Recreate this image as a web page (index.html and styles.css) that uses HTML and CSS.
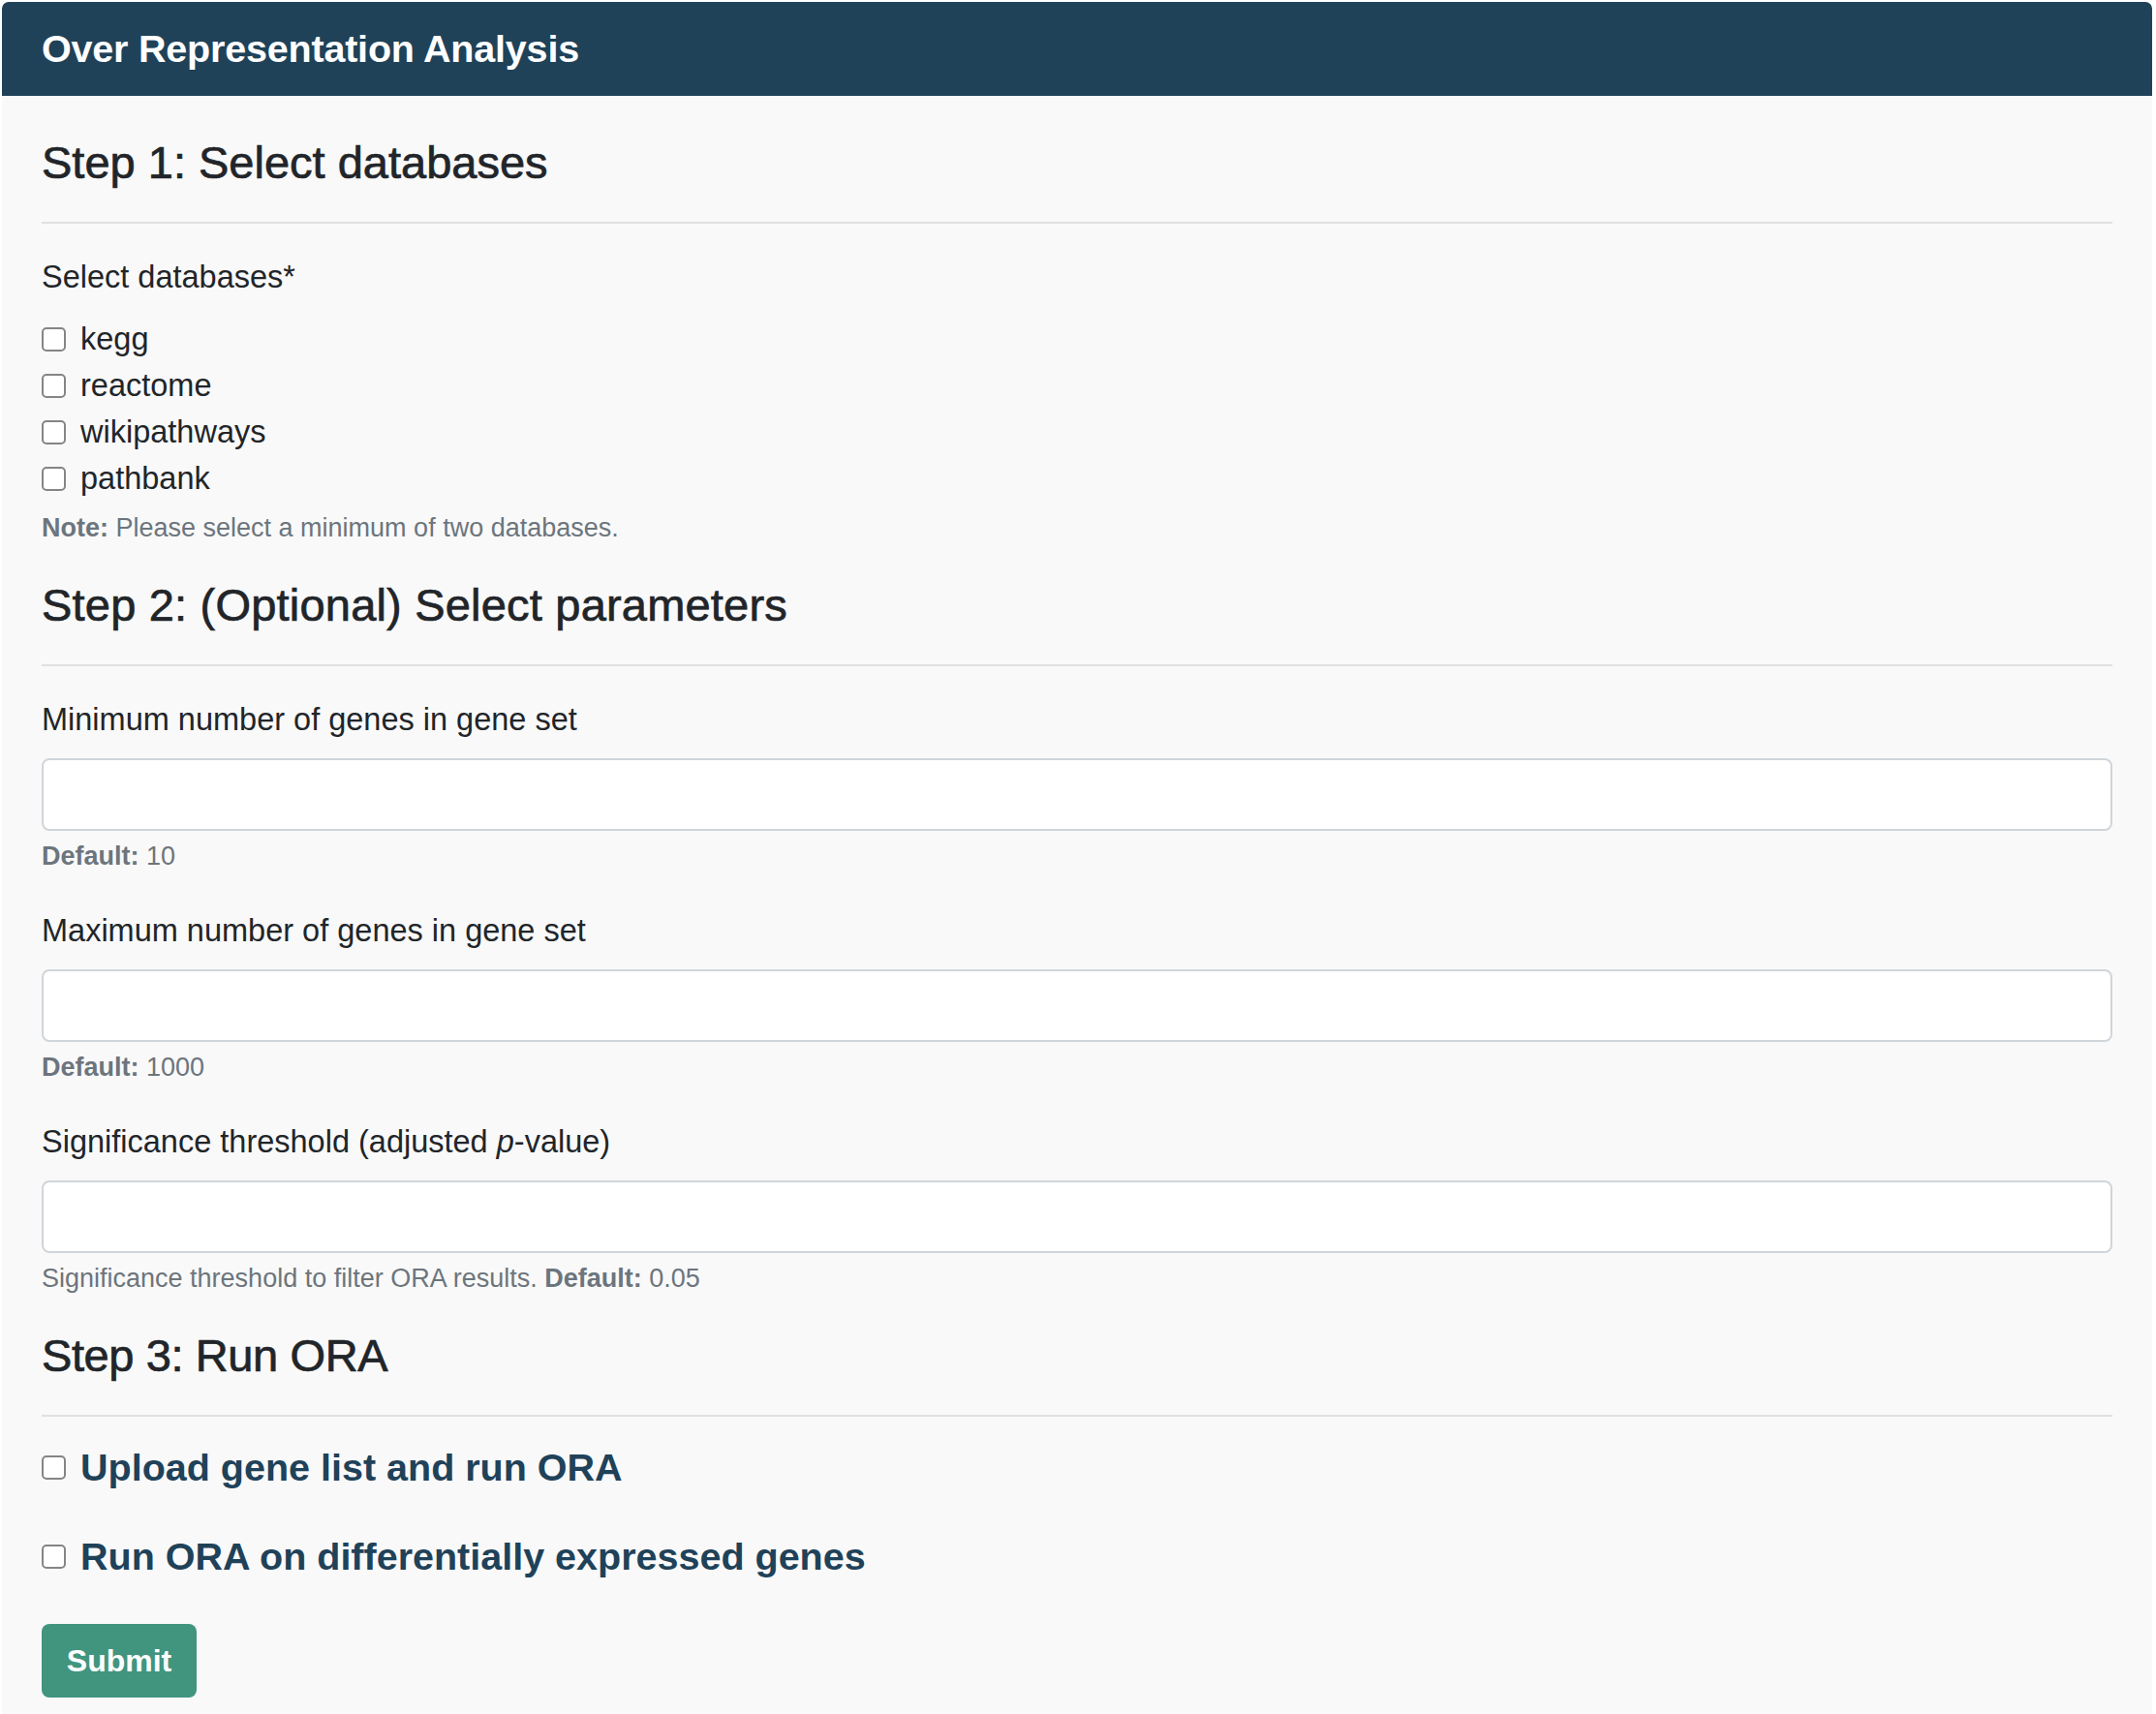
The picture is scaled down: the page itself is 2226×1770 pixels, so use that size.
FILE: index.html
```html
<!DOCTYPE html>
<html lang="en">
<head>
<meta charset="utf-8">
<title>Over Representation Analysis</title>
<link rel="stylesheet" href="styles.css">
</head>
<body>
<div class="card">
  <div class="card-header">
    <h1 class="card-title">Over Representation Analysis</h1>
  </div>
  <form class="card-body">
    <section class="step">
      <h2 class="step-title">Step 1: Select databases</h2>
      <hr class="rule">
      <div class="group">
        <div class="field-label">Select databases*</div>
        <div class="check-list">
          <label class="check"><input type="checkbox" class="box"><span>kegg</span></label>
          <label class="check"><input type="checkbox" class="box"><span>reactome</span></label>
          <label class="check"><input type="checkbox" class="box"><span>wikipathways</span></label>
          <label class="check"><input type="checkbox" class="box"><span>pathbank</span></label>
        </div>
        <div class="help help-note"><b>Note:</b> Please select a minimum of two databases.</div>
      </div>
    </section>

    <section class="step">
      <h2 class="step-title">Step 2: (Optional) Select parameters</h2>
      <hr class="rule">
      <div class="group">
        <label class="field-label">Minimum number of genes in gene set</label>
        <input type="text" class="text-input">
        <div class="help"><b>Default:</b> 10</div>
      </div>
      <div class="group">
        <label class="field-label">Maximum number of genes in gene set</label>
        <input type="text" class="text-input">
        <div class="help"><b>Default:</b> 1000</div>
      </div>
      <div class="group group-last">
        <label class="field-label">Significance threshold (adjusted <i>p</i>-value)</label>
        <input type="text" class="text-input">
        <div class="help">Significance threshold to filter ORA results. <b>Default:</b> 0.05</div>
      </div>
    </section>

    <section class="step">
      <h2 class="step-title">Step 3: Run ORA</h2>
      <hr class="rule">
      <div class="ora-list">
        <label class="ora-option"><input type="checkbox" class="box"><span>Upload gene list and run ORA</span></label>
        <label class="ora-option"><input type="checkbox" class="box"><span>Run ORA on differentially expressed genes</span></label>
      </div>
      <button type="button" class="btn-submit">Submit</button>
    </section>
  </form>
</div>
</body>
</html>
```
FILE: styles.css
```css
* {
  box-sizing: border-box;
}

html, body {
  margin: 0;
  padding: 0;
  background: #ffffff;
}

body {
  font-family: "Liberation Sans", Arial, Helvetica, sans-serif;
  color: #212529;
}

.card {
  margin: 2px 4px 0 2px;
  background: #f9f9f9;
  border-radius: 7px 7px 0 0;
  overflow: hidden;
  min-height: 1800px;
}

.card-header {
  height: 97px;
  background: #1f4259;
  display: flex;
  align-items: center;
  padding: 0 41px;
}

.card-title {
  margin: 0;
  color: #ffffff;
  font-size: 39.5px;
  font-weight: 700;
  line-height: 1.2;
  letter-spacing: -0.2px;
}

.card-body {
  display: block;
  padding: 40px 41px;
}

.step-title {
  margin: 0 0 16px;
  font-size: 47px;
  font-weight: 400;
  line-height: 58px;
  color: #212529;
  -webkit-text-stroke: 0.7px #212529;
}

.step:nth-child(2) .step-title {
  letter-spacing: 0.2px;
}

.step:nth-child(3) .step-title {
  letter-spacing: -0.4px;
}

.rule {
  margin: 32px 0 31px;
  border: 0;
  border-top: 2px solid #e0e0e0;
  height: 0;
}

.group {
  margin-bottom: 32px;
}

.step:first-child .group,
.group-last {
  margin-bottom: 30px;
}

.field-label {
  display: block;
  font-size: 32.5px;
  line-height: 48px;
  margin-bottom: 16px;
}

.check-list {
  display: flex;
  flex-direction: column;
}

.check {
  display: flex;
  align-items: center;
  gap: 15px;
  height: 48px;
  font-size: 32.5px;
}

.box {
  -webkit-appearance: none;
  appearance: none;
  flex: none;
  width: 25px;
  height: 25px;
  margin: 0;
  border: 2px solid #858585;
  border-radius: 5px;
  background: #ffffff;
}

.help {
  margin-top: 5px;
  font-size: 27px;
  line-height: 42px;
  color: #6c757d;
}

.help b {
  font-weight: 700;
}

.help-note {
  margin-top: 6px;
}

.text-input {
  display: block;
  width: 100%;
  height: 75px;
  margin: 0;
  border: 2px solid #d0d5da;
  border-radius: 8px;
  background: #ffffff;
  font-size: 32px;
  padding: 0 24px;
}

.ora-list {
  display: flex;
  flex-direction: column;
  gap: 44px;
  margin-top: -3px;
}

.ora-option {
  display: flex;
  align-items: center;
  gap: 15px;
  height: 48px;
  font-size: 39.5px;
  font-weight: 700;
  color: #1f4259;
}

.btn-submit {
  display: block;
  margin-top: 46px;
  width: 160px;
  height: 76px;
  border: 0;
  border-radius: 8px;
  background: #41957f;
  color: #ffffff;
  font-family: "Liberation Sans", Arial, Helvetica, sans-serif;
  font-size: 32px;
  font-weight: 700;
  padding: 0;
}
```
